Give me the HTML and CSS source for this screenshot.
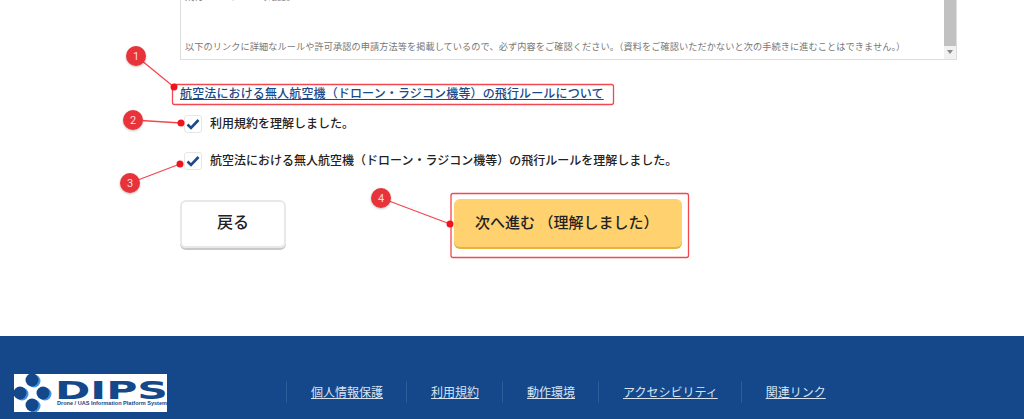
FILE: index.html
```html
<!DOCTYPE html>
<html lang="ja">
<head>
  <meta charset="UTF-8">
  <title>DIPS 利用規約</title>
  <link rel="stylesheet" href="styles.css">
</head>
<body>

<main class="content">
  <div class="rule-box">
    <div class="rule-text">
      <p class="cut-line">飛行ルールについて確認。</p>
      <p>以下のリンクに詳細なルールや許可承認の申請方法等を掲載しているので、必ず内容をご確認ください。（資料をご確認いただかないと次の手続きに進むことはできません。）</p>
    </div>
    <div class="scrollbar">
      <div class="scroll-thumb"></div>
      <div class="scroll-arrow"></div>
    </div>
  </div>

  <a class="rule-link" href="#">航空法における無人航空機（ドローン・ラジコン機等）の飛行ルールについて</a>

  <label class="check-row first">
    <span class="check-box"><svg width="14" height="12" viewBox="0 0 14 12"><path d="M1.5 6.5 L5 10 L12.5 2" fill="none" stroke="#1a4a8a" stroke-width="2.6"/></svg></span>
    <span class="check-text">利用規約を理解しました。</span>
  </label>
  <label class="check-row second">
    <span class="check-box"><svg width="14" height="12" viewBox="0 0 14 12"><path d="M1.5 6.5 L5 10 L12.5 2" fill="none" stroke="#1a4a8a" stroke-width="2.6"/></svg></span>
    <span class="check-text">航空法における無人航空機（ドローン・ラジコン機等）の飛行ルールを理解しました。</span>
  </label>

  <div class="button-row">
    <a class="btn btn-back" href="#">戻る</a>
    <a class="btn btn-next" href="#">次へ進む （理解しました）</a>
  </div>
</main>

<footer class="site-footer">
  <div class="logo">
    <svg width="153" height="38" viewBox="0 0 153 38">
      <g fill="#3f93e6">
        <circle cx="20" cy="7" r="6.5"/><circle cx="8" cy="20" r="6.5"/>
        <circle cx="31" cy="20" r="6.5"/><circle cx="20" cy="32" r="6.5"/>
      </g>
      <g fill="#14488a">
        <circle cx="18" cy="6" r="6.5"/><circle cx="6" cy="19" r="6.5"/>
        <circle cx="29" cy="19" r="6.5"/><circle cx="18" cy="31" r="6.5"/>
      </g>
      <text class="logo-word" x="41" y="25" textLength="113" lengthAdjust="spacingAndGlyphs">DIPS</text>
      <text class="logo-sub" x="43" y="31" textLength="110" lengthAdjust="spacingAndGlyphs">Drone / UAS Information Platform System</text>
    </svg>
  </div>
  <nav class="footer-nav">
    <a href="#">個人情報保護</a>
    <a href="#">利用規約</a>
    <a href="#">動作環境</a>
    <a href="#">アクセシビリティ</a>
    <a href="#">関連リンク</a>
  </nav>
</footer>

<!-- red callouts drawn on top of the screenshot -->
<svg class="callouts" width="1024" height="419" viewBox="0 0 1024 419">
  <g fill="none" stroke="#f4474f" stroke-width="1.3">
    <rect x="172.5" y="84.5" width="441" height="20" rx="2"/>
    <rect x="451" y="193.5" width="237.5" height="64" rx="2"/>
    <path d="M136 56 L174 87"/>
    <path d="M133 120 L181 123"/>
    <path d="M130 183 L180 164"/>
    <path d="M381 198 L450 224"/>
  </g>
  <g fill="#f0131d">
    <circle cx="174" cy="87" r="3.5"/>
    <circle cx="181" cy="123" r="3.5"/>
    <circle cx="180" cy="164" r="3.5"/>
    <circle cx="450" cy="224" r="3.5"/>
  </g>
  <g class="badges" fill="#e8333a">
    <circle cx="136" cy="56" r="10"/>
    <circle cx="133" cy="120" r="10"/>
    <circle cx="130" cy="183" r="10"/>
    <circle cx="381" cy="198" r="10"/>
  </g>
  <g class="badge-nums">
    <text x="136" y="60">1</text>
    <text x="133" y="124">2</text>
    <text x="130" y="187">3</text>
    <text x="381" y="202">4</text>
  </g>
</svg>

</body>
</html>
```

FILE: styles.css
```css
html, body { margin: 0; padding: 0; }
body {
  position: relative;
  width: 1024px; height: 419px;
  overflow: hidden;
  display: flex; flex-direction: column;
  background: #fff; color: #222;
  font-family: "Noto Sans CJK JP", "Noto Sans", sans-serif;
}
.content { flex: 1; padding-left: 180px; }

.rule-box {
  width: 777px; height: 60px;
  box-sizing: border-box;
  display: flex;
  border: 1px solid #ddd; border-top: none;
  overflow: hidden;
}
.rule-text {
  flex: 1;
  display: flex; flex-direction: column; justify-content: flex-end;
  padding: 0 0 6px 4px;
  font-size: 9.17px; color: #777;
  letter-spacing: .09px;
}
.rule-text p { margin: 0; white-space: nowrap; line-height: 14px; }
.rule-text .cut-line { margin-bottom: 36px; }
.scrollbar { width: 12px; display: flex; flex-direction: column; background: #f1f1f1; }
.scroll-thumb { height: 46px; background: #c1c1c1; }
.scroll-arrow {
  width: 0; height: 0;
  margin: 4px auto 0;
  border-left: 3px solid transparent;
  border-right: 3px solid transparent;
  border-top: 4px solid #888;
}

.rule-link {
  display: block;
  margin-top: 24px;
  font-size: 12px; line-height: 18px; font-weight: 500;
  letter-spacing: .14px;
  color: #1a4a8a;
}

.check-row {
  display: flex; align-items: center; gap: 8px;
  margin-left: 4px;
  font-size: 12px; font-weight: 500; color: #222;
}
.check-row.first { margin-top: 13px; }
.check-row.second { margin-top: 19px; }
.check-text { position: relative; top: -2px; }
.check-box {
  width: 18px; height: 18px;
  box-sizing: border-box;
  display: flex; align-items: center; justify-content: center;
  border: 1px solid #e6e6e6; border-radius: 3px;
  background: #fff;
}

.button-row { display: flex; align-items: flex-start; gap: 168px; margin-top: 29px; }
.btn {
  display: flex; align-items: center;
  box-sizing: border-box;
  text-decoration: none; font-weight: 500; color: #222;
  border-radius: 6px;
}
.btn-back {
  width: 106px; height: 48px;
  justify-content: center;
  padding-bottom: 6px;
  border: 2px solid #e8e8e8;
  box-shadow: 0 2px 0 #c9c9c9;
  font-size: 16px;
  margin-top: 1px;
}
.btn-next {
  width: 228px; height: 48px;
  padding: 0 0 4px 21px;
  background: #ffd26f;
  box-shadow: 0 2px 0 #e8b23f;
  font-size: 15px;
}

.site-footer {
  height: 83px;
  box-sizing: border-box;
  display: flex; align-items: flex-start;
  padding: 38px 0 0 14px;
  background: #14488a;
}
.logo { width: 153px; height: 38px; background: #fff; overflow: hidden; }
.logo svg { display: block; }
.logo-word { font-family: "DejaVu Sans", sans-serif; font-weight: bold; font-size: 25px; fill: #14488a; }
.logo-sub { font-family: "Liberation Sans", sans-serif; font-weight: bold; font-size: 5px; fill: #14488a; }
.footer-nav { display: flex; margin: 7px 0 0 119px; }
.footer-nav a {
  padding: 0 23px 0 24px;
  border-left: 1px solid #2a5c9a;
  font-size: 12px; line-height: 22px;
  color: #d8e3f0;
}

.callouts { position: absolute; left: 0; top: 0; pointer-events: none; }
.badges { filter: drop-shadow(0 1px 1px rgba(0,0,0,.25)); }
.badge-nums text {
  fill: #fbdcdc; font-size: 11px; text-anchor: middle;
  font-family: "Roboto", sans-serif;
}
```
